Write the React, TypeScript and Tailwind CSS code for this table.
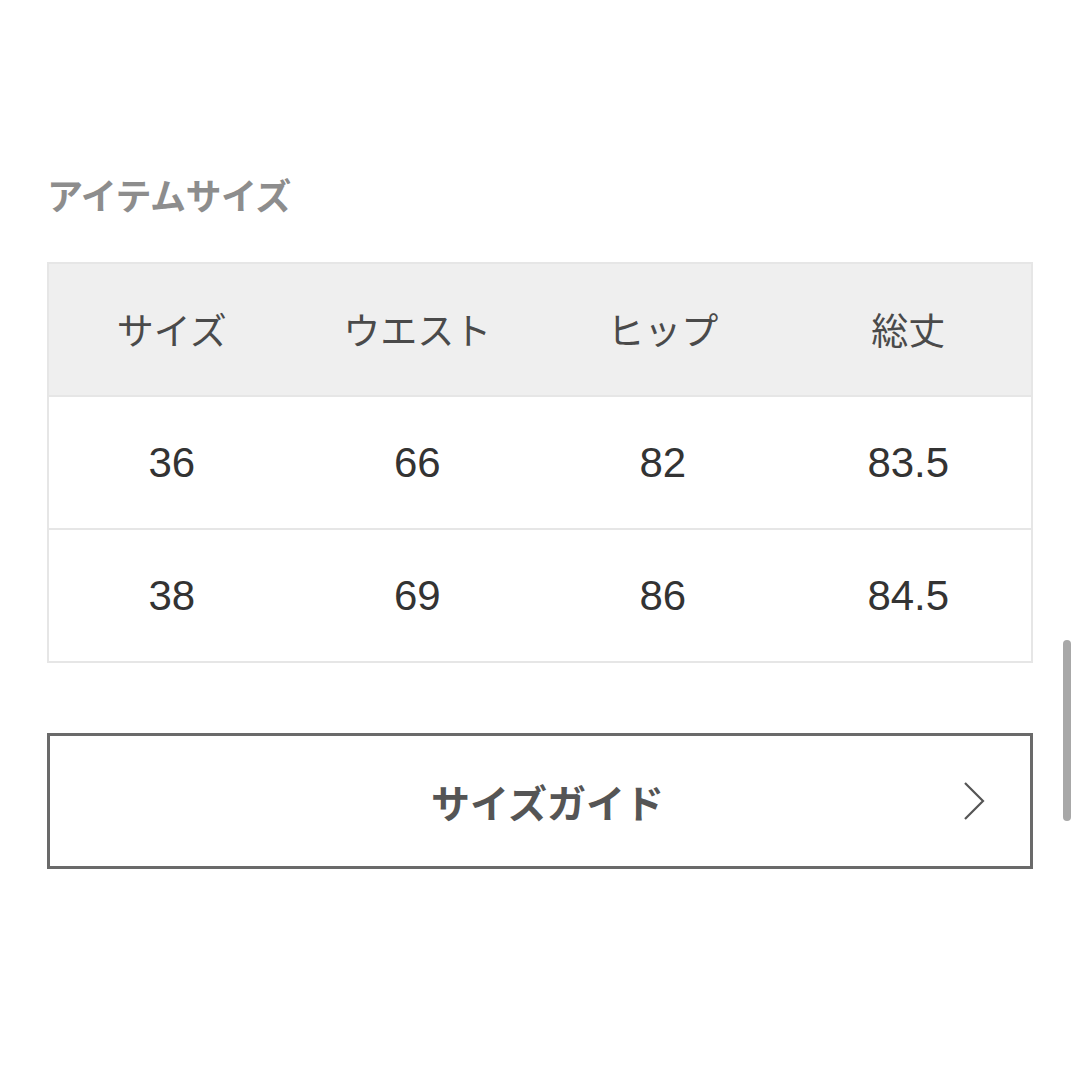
const headers = ["サイズ", "ウエスト", "ヒップ", "総丈"];

const rows = [
  ["36", "66", "82", "83.5"],
  ["38", "69", "86", "84.5"],
];

const jp = "font-['Noto_Sans_CJK_JP','Noto_Sans',sans-serif]";

export default function App() {
  return (
    <div className="relative h-[1080px] w-[1080px] overflow-hidden bg-white">
      <div className="pl-[47px] pt-[176px] w-[1033px]">
        <h2 className={`${jp} text-[36px] font-bold leading-none tracking-[-0.5px] text-[#8d8d8d]`}>
          アイテムサイズ
        </h2>

        <div className="mt-[50px] border-2 border-[#e6e6e6]">
          <div className="grid h-[131px] grid-cols-4 items-center bg-[#efefef]">
            {headers.map((h) => (
              <div key={h} className={`${jp} text-center text-[37px] leading-none text-[#4a4a4a]`}>
                {h}
              </div>
            ))}
          </div>
          {rows.map((row, i) => (
            <div
              key={i}
              className="grid h-[133px] grid-cols-4 items-center border-t-2 border-[#e6e6e6]"
            >
              {row.map((v, j) => (
                <div
                  key={j}
                  className="text-center font-['Liberation_Sans',Arial,sans-serif] text-[42px] leading-none text-[#333]"
                >
                  {v}
                </div>
              ))}
            </div>
          ))}
        </div>

        <button className="relative mt-[70px] flex h-[136px] w-full items-center justify-center border-[3px] border-[#6a6a6a] bg-white">
          <span className={`${jp} ml-[15px] text-[39px] font-bold leading-none text-[#555]`}>
            サイズガイド
          </span>
          <svg
            className="absolute right-[44px] top-1/2 -translate-y-1/2"
            width="24"
            height="40"
            viewBox="0 0 24 40"
            fill="none"
            stroke="#555"
            strokeWidth="2.2"
          >
            <path d="M3 2l18 18L3 38" />
          </svg>
        </button>
      </div>

      <div className="absolute left-[1063px] top-[640px] h-[181px] w-[8px] rounded-full bg-[#a8a8a8]" />
    </div>
  );
}
